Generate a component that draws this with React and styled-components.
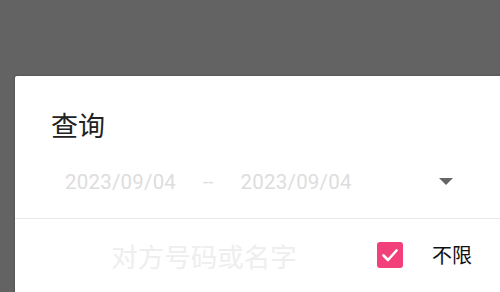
import React, { useState } from 'react';
import styled, { createGlobalStyle } from 'styled-components';

const GlobalStyle = createGlobalStyle`
  html, body {
    margin: 0;
    padding: 0;
    height: 100%;
    overflow: hidden;
  }
  #root {
    height: 100%;
  }
`;

const Overlay = styled.div`
  height: 100vh;
  background: #636363;
  padding: 76px 0 0 15px;
  box-sizing: border-box;
  font-family: Roboto, "Noto Sans CJK SC", sans-serif;
`;

const Sheet = styled.div`
  background: #fff;
  height: 100%;
  border-top-left-radius: 2px;
  box-shadow: 0 0 3px rgba(0, 0, 0, 0.25);
  display: flex;
  flex-direction: column;
`;

const Title = styled.div`
  font-size: 27px;
  color: #222;
  padding: 30px 0 0 36px;
  height: 42px;
  line-height: 42px;
`;

const DateRow = styled.div`
  display: flex;
  align-items: center;
  height: 38px;
  margin-top: 15px;
  padding-left: 50px;
  padding-right: 47px;
  border-bottom: 1px solid #e8e8e8;
  padding-bottom: 18px;
`;

const DateText = styled.span`
  font-size: 20.5px;
  color: #dddddd;
  letter-spacing: 0.2px;
`;

const Dash = styled.span`
  font-size: 19px;
  color: #dddddd;
  margin: 0 27px;
`;

const Spacer = styled.div`
  flex: 1;
`;

const Triangle = styled.div`
  width: 0;
  height: 0;
  border-left: 7px solid transparent;
  border-right: 7px solid transparent;
  border-top: 7px solid #666;
`;

const FilterRow = styled.div`
  display: flex;
  align-items: center;
  height: 76px;
  padding-right: 28px;
  margin-top: -2px;
`;

const SearchInput = styled.input`
  flex: 1;
  min-width: 0;
  border: none;
  outline: none;
  background: transparent;
  text-align: center;
  font-family: Roboto, "Noto Sans CJK SC", sans-serif;
  font-size: 26.5px;
  padding: 0 0 0 16px;
  margin-top: 6px;
  color: #333;
  &::placeholder {
    color: #eeeeee;
  }
`;

const CheckLabel = styled.label`
  display: flex;
  align-items: center;
  gap: 29px;
  cursor: pointer;
  font-size: 20px;
  color: #111;
`;

const Box = styled.span`
  width: 26px;
  height: 26px;
  border-radius: 3px;
  background: ${(p) => (p.checked ? '#f2407a' : '#fff')};
  border: ${(p) => (p.checked ? 'none' : '2px solid #999')};
  box-sizing: border-box;
  display: flex;
  align-items: center;
  justify-content: center;
`;

const App = () => {
  const [unlimited, setUnlimited] = useState(true);

  return (
    <>
      <GlobalStyle />
      <Overlay>
        <Sheet>
          <Title>查询</Title>
          <DateRow>
            <DateText>2023/09/04</DateText>
            <Dash>--</Dash>
            <DateText>2023/09/04</DateText>
            <Spacer />
            <Triangle />
          </DateRow>
          <FilterRow>
            <SearchInput placeholder="对方号码或名字" />
            <CheckLabel onClick={() => setUnlimited(!unlimited)}>
              <Box checked={unlimited}>
                {unlimited && (
                  <svg width="20" height="20" viewBox="0 0 20 20">
                    <path d="M3.5 10.5 L8 15 L16.5 5.5" fill="none" stroke="#fff" strokeWidth="2.6" strokeLinecap="round" strokeLinejoin="round" />
                  </svg>
                )}
              </Box>
              不限
            </CheckLabel>
          </FilterRow>
        </Sheet>
      </Overlay>
    </>
  );
};

export default App;
